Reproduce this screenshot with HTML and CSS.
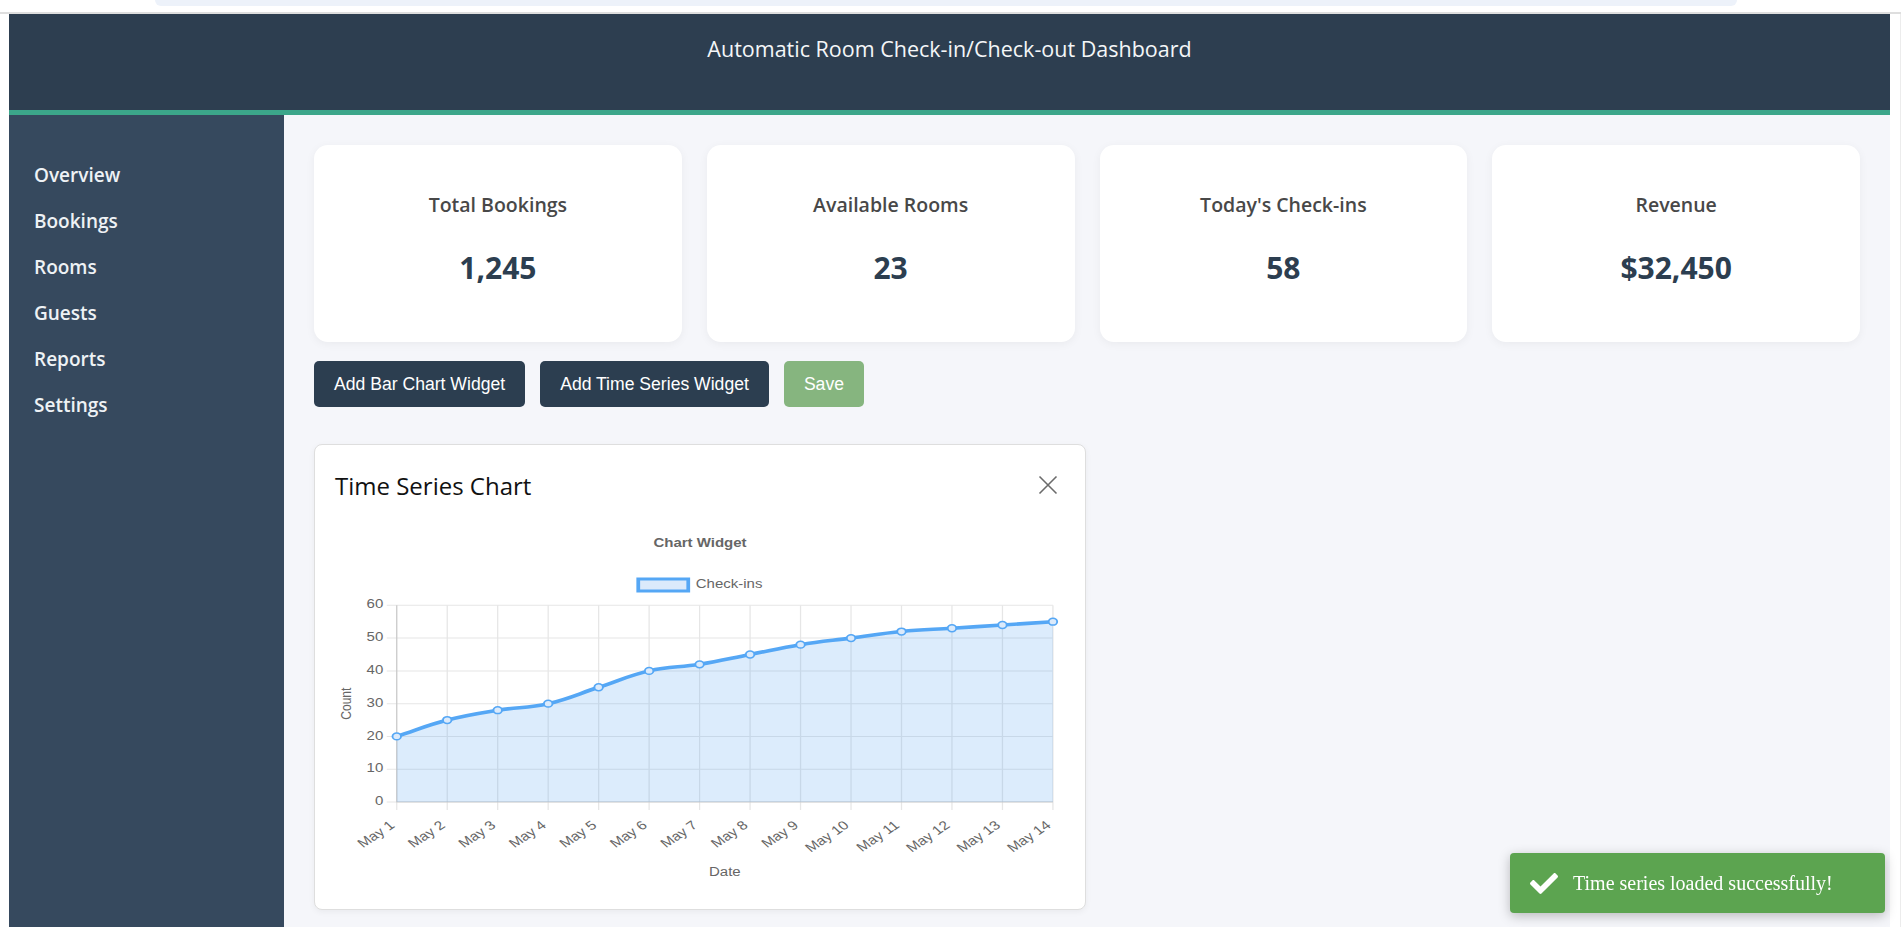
FILE: index.html
```html
<!DOCTYPE html>
<html lang="en">
<head>
<meta charset="utf-8">
<title>Automatic Room Check-in/Check-out Dashboard</title>
<link rel="stylesheet" href="styles.css">
</head>
<body>
<div class="chrome"><div class="omnibox"></div></div>
<div class="frame">
  <div class="app">
    <header class="topbar">
      <h1 class="app-title">Automatic Room Check-in/Check-out Dashboard</h1>
    </header>
    <div class="layout">
      <nav class="sidebar">
        <ul class="nav">
          <li class="nav-item">Overview</li>
          <li class="nav-item">Bookings</li>
          <li class="nav-item">Rooms</li>
          <li class="nav-item">Guests</li>
          <li class="nav-item">Reports</li>
          <li class="nav-item">Settings</li>
        </ul>
      </nav>
      <main class="main">
        <section class="stats">
          <div class="stat-card"><h3 class="stat-label">Total Bookings</h3><p class="stat-value">1,245</p></div>
          <div class="stat-card"><h3 class="stat-label">Available Rooms</h3><p class="stat-value">23</p></div>
          <div class="stat-card"><h3 class="stat-label">Today's Check-ins</h3><p class="stat-value">58</p></div>
          <div class="stat-card"><h3 class="stat-label">Revenue</h3><p class="stat-value">$32,450</p></div>
        </section>
        <div class="toolbar">
          <button class="btn btn-dark">Add Bar Chart Widget</button>
          <button class="btn btn-dark">Add Time Series Widget</button>
          <button class="btn btn-save">Save</button>
        </div>
        <div class="widgets">
          <div class="widget">
            <div class="widget-head">
              <h2 class="widget-title">Time Series Chart</h2>
              <button class="close-btn" aria-label="Close">
                <svg class="close-icon" viewBox="0 0 20 20" width="20" height="20"><path d="M1.5 1.5 L18.5 18.5 M18.5 1.5 L1.5 18.5" stroke="#6b6b6b" stroke-width="1.6" fill="none"/></svg>
              </button>
            </div>
            <svg class="chart" viewBox="1 0 584 374" preserveAspectRatio="none" width="730" height="374">
              <text class="c-title" x="293" y="29">Chart Widget</text>
              <rect x="243.6" y="64" width="40" height="12" fill="#dbeafb" stroke="#55a7f5" stroke-width="3"/>
              <text class="c-legend" x="289.6" y="70">Check-ins</text>
              <g class="grid" stroke="#e6e6e6" stroke-width="1" fill="none">
                <path d="M42.4 287H575.34M42.4 254.22H575.34M42.4 221.44H575.34M42.4 188.66H575.34M42.4 155.88H575.34M42.4 123.10H575.34M42.4 90.32H575.34"/>
                <path d="M50.40 90.32V295M90.78 90.32V295M131.16 90.32V295M171.54 90.32V295M211.92 90.32V295M252.30 90.32V295M292.68 90.32V295M333.06 90.32V295M373.44 90.32V295M413.82 90.32V295M454.20 90.32V295M494.58 90.32V295M534.96 90.32V295M575.34 90.32V295"/>
              </g>
              <path class="area" d="M50.40 221.44 C66.55 214.88 74.63 210.29 90.78 205.05 C106.93 199.81 115.01 198.50 131.16 195.22 C147.31 191.94 155.39 193.25 171.54 188.66 C187.69 184.07 195.77 178.83 211.92 172.27 C228.07 165.71 236.15 160.47 252.30 155.88 C268.45 151.29 276.53 152.60 292.68 149.32 C308.83 146.04 316.91 143.42 333.06 139.49 C349.21 135.56 357.29 132.94 373.44 129.66 C389.59 126.38 397.67 125.72 413.82 123.10 C429.97 120.48 438.05 118.51 454.20 116.54 C470.35 114.57 478.43 114.58 494.58 113.27 C510.73 111.96 518.81 111.30 534.96 109.99 C551.11 108.68 559.19 108.02 575.34 106.71 L575.34 287 L50.40 287 Z" fill="rgba(82,160,240,0.2)"/>
              <path d="M50.4 90.32V287H575.34" stroke="rgba(0,0,0,0.13)" stroke-width="1" fill="none"/>
              <path class="line" d="M50.40 221.44 C66.55 214.88 74.63 210.29 90.78 205.05 C106.93 199.81 115.01 198.50 131.16 195.22 C147.31 191.94 155.39 193.25 171.54 188.66 C187.69 184.07 195.77 178.83 211.92 172.27 C228.07 165.71 236.15 160.47 252.30 155.88 C268.45 151.29 276.53 152.60 292.68 149.32 C308.83 146.04 316.91 143.42 333.06 139.49 C349.21 135.56 357.29 132.94 373.44 129.66 C389.59 126.38 397.67 125.72 413.82 123.10 C429.97 120.48 438.05 118.51 454.20 116.54 C470.35 114.57 478.43 114.58 494.58 113.27 C510.73 111.96 518.81 111.30 534.96 109.99 C551.11 108.68 559.19 108.02 575.34 106.71" fill="none" stroke="#55a7f5" stroke-width="3.6"/>
              <g class="pts" fill="#dbeafb" stroke="#55a7f5" stroke-width="1.5">
                <circle cx="50.40" cy="221.44" r="3.4"/><circle cx="90.78" cy="205.05" r="3.4"/><circle cx="131.16" cy="195.22" r="3.4"/><circle cx="171.54" cy="188.66" r="3.4"/><circle cx="211.92" cy="172.27" r="3.4"/><circle cx="252.30" cy="155.88" r="3.4"/><circle cx="292.68" cy="149.32" r="3.4"/><circle cx="333.06" cy="139.49" r="3.4"/><circle cx="373.44" cy="129.66" r="3.4"/><circle cx="413.82" cy="123.10" r="3.4"/><circle cx="454.20" cy="116.54" r="3.4"/><circle cx="494.58" cy="113.27" r="3.4"/><circle cx="534.96" cy="109.99" r="3.4"/><circle cx="575.34" cy="106.71" r="3.4"/>
              </g>
              <g class="c-yticks">
                <text x="39.6" y="287">0</text><text x="39.6" y="254.22">10</text><text x="39.6" y="221.44">20</text><text x="39.6" y="188.66">30</text><text x="39.6" y="155.88">40</text><text x="39.6" y="123.10">50</text><text x="39.6" y="90.32">60</text>
              </g>
              <g class="c-xticks">
                <text transform="translate(47.4 309) rotate(-40)">May 1</text>
                <text transform="translate(87.78 309) rotate(-40)">May 2</text>
                <text transform="translate(128.16 309) rotate(-40)">May 3</text>
                <text transform="translate(168.54 309) rotate(-40)">May 4</text>
                <text transform="translate(208.92 309) rotate(-40)">May 5</text>
                <text transform="translate(249.30 309) rotate(-40)">May 6</text>
                <text transform="translate(289.68 309) rotate(-40)">May 7</text>
                <text transform="translate(330.06 309) rotate(-40)">May 8</text>
                <text transform="translate(370.44 309) rotate(-40)">May 9</text>
                <text transform="translate(410.82 309) rotate(-40)">May 10</text>
                <text transform="translate(451.20 309) rotate(-40)">May 11</text>
                <text transform="translate(491.58 309) rotate(-40)">May 12</text>
                <text transform="translate(531.96 309) rotate(-40)">May 13</text>
                <text transform="translate(572.34 309) rotate(-40)">May 14</text>
              </g>
              <text class="c-axis" x="312.87" y="357.7">Date</text>
              <text class="c-axis" transform="translate(10.9 188.7) rotate(-90)">Count</text>
            </svg>
          </div>
        </div>
      </main>
    </div>
  </div>
  <div class="gutter"></div>
</div>
<div class="toast">
  <svg class="toast-icon" viewBox="0 64 512 384" width="28" height="21"><path fill="#fff" d="M173.898 439.404l-166.4-166.4c-9.997-9.997-9.997-26.206 0-36.204l36.203-36.204c9.997-9.998 26.207-9.998 36.204 0L192 312.69 432.095 72.596c9.997-9.997 26.207-9.997 36.204 0l36.203 36.204c9.997 9.997 9.997 26.206 0 36.204l-294.4 294.401c-9.998 9.997-26.207 9.997-36.204-.001z"/></svg>
  <span class="toast-text">Time series loaded successfully!</span>
</div>
</body>
</html>
```

FILE: styles.css
```css
html, body {
  margin: 0;
  padding: 0;
  background: #ffffff;
  overflow: hidden;
  height: 100%;
}

body {
  font-family: "Open Sans", "Noto Sans", sans-serif;
}

.chrome {
  height: 12px;
  border-bottom: 2px solid #dedede;
}

.omnibox {
  margin-left: 155px;
  width: 1582px;
  height: 6px;
  background: #edf2fa;
  border-radius: 0 0 12px 12px;
}

.frame {
  display: flex;
  height: calc(100vh - 14px);
}

.app {
  margin-left: 9px;
  width: 1881px;
  display: flex;
  flex-direction: column;
  background: #f5f6fa;
}

.gutter {
  flex: 1;
  border-right: 1px solid #ececec;
}

.topbar {
  height: 101px;
  flex: none;
  box-sizing: border-box;
  padding-top: 20px;
  background: #2d3e50;
  border-bottom: 5px solid #3ca68a;
}

.app-title {
  margin: 0;
  text-align: center;
  color: #f4f6f8;
  font-weight: 400;
  font-size: 21.5px;
  line-height: 29px;
}

.layout {
  flex: 1;
  display: flex;
  min-height: 0;
}

.sidebar {
  width: 275px;
  flex: none;
  background: #36495e;
  padding-top: 37px;
  box-sizing: border-box;
}

.nav {
  list-style: none;
  margin: 0;
  padding: 0;
}

.nav-item {
  padding: 12px 25px;
  line-height: 22px;
  font-size: 19px;
  font-weight: 600;
  color: #eef2f5;
}

.main {
  flex: 1;
  padding: 30px;
  box-sizing: border-box;
  min-width: 0;
}

.stats {
  display: grid;
  grid-template-columns: repeat(4, 1fr);
  gap: 25px;
}

.stat-card {
  background: #ffffff;
  border-radius: 14px;
  box-shadow: 0 2px 10px rgba(0, 0, 0, 0.05);
  padding: 48px 20px 56px;
  text-align: center;
}

.stat-label {
  margin: 0 0 33px;
  font-size: 19.5px;
  line-height: 24px;
  font-weight: 600;
  color: #484848;
}

.stat-value {
  margin: 0;
  font-size: 30px;
  line-height: 36px;
  font-weight: 700;
  color: #2c3e50;
}

.toolbar {
  display: flex;
  gap: 15px;
  margin-top: 19px;
}

.btn {
  border: none;
  border-radius: 5px;
  padding: 10px 20px;
  font-family: "Liberation Sans", Arial, sans-serif;
  font-size: 17.6px;
  line-height: 26px;
  color: #ffffff;
  cursor: pointer;
}

.btn-dark {
  background: #2c3e50;
}

.btn-save {
  background: #86b57f;
}

.widgets {
  display: grid;
  grid-template-columns: 772px;
  margin-top: 37px;
}

.widget {
  background: #ffffff;
  border: 1px solid #dedede;
  border-radius: 8px;
  box-shadow: 0 2px 6px rgba(0, 0, 0, 0.05);
  padding: 20px;
}

.widget-head {
  height: 50px;
  box-sizing: border-box;
  padding-bottom: 9px;
  display: flex;
  align-items: center;
  justify-content: space-between;
}

.widget-title {
  margin: 0;
  font-size: 24px;
  font-weight: 400;
  color: #111111;
}

.close-btn {
  background: none;
  border: none;
  padding: 0;
  margin-right: 7px;
  width: 20px;
  height: 20px;
  display: flex;
  margin-top: -1px;
}

.chart {
  display: block;
  width: 730px;
  height: 374px;
  font-family: "Liberation Sans", Arial, sans-serif;
}

.c-title {
  font-size: 12px;
  font-weight: 700;
  fill: #666666;
  text-anchor: middle;
  dominant-baseline: middle;
}

.c-legend {
  font-size: 12px;
  fill: #666666;
  dominant-baseline: middle;
}

.c-yticks text {
  font-size: 12px;
  fill: #666666;
  text-anchor: end;
  dominant-baseline: middle;
}

.c-xticks text {
  font-size: 12.5px;
  fill: #666666;
  text-anchor: end;
  dominant-baseline: middle;
}

.c-axis {
  font-size: 12px;
  fill: #666666;
  text-anchor: middle;
  dominant-baseline: middle;
}

.toast {
  position: fixed;
  right: 16px;
  bottom: 14px;
  width: 375px;
  height: 60px;
  box-sizing: border-box;
  padding-left: 20px;
  display: flex;
  align-items: center;
  gap: 15px;
  background: #5ca450;
  border-radius: 4px;
  box-shadow: 0 3px 12px rgba(0, 0, 0, 0.25);
}

.toast-icon {
  flex: none;
}

.toast-text {
  font-family: "Liberation Serif", "Times New Roman", serif;
  font-size: 20px;
  color: #ffffff;
}
```
